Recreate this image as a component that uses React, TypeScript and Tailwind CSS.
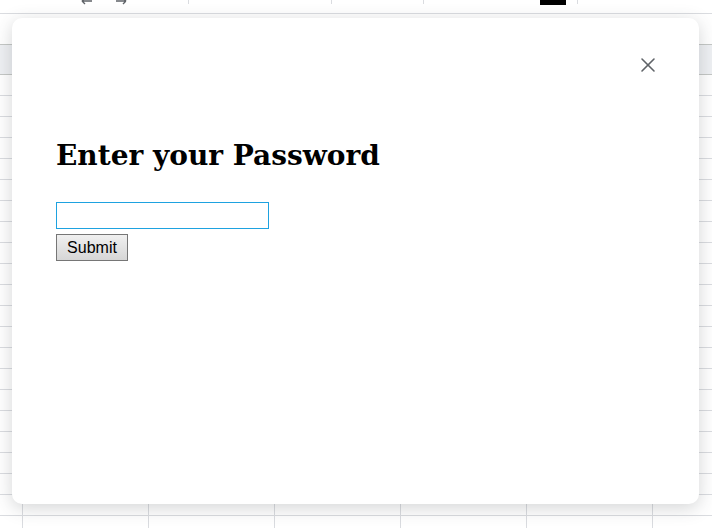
import { X } from 'lucide-react';

const rows = Array.from({ length: 22 });
const cols = Array.from({ length: 6 });

function Arrow({ flip }: { flip?: boolean }) {
  return (
    <svg width="14" height="8" viewBox="0 0 14 8" className={flip ? '-scale-x-100' : ''}>
      <path d="M2 2 H12 M2 2 L5 -1 M2 2 L5 5" stroke="#5f6368" strokeWidth="1.4" fill="none" />
    </svg>
  );
}

function SheetBackdrop() {
  return (
    <div className="absolute inset-0 overflow-hidden bg-white">
      {/* toolbar remnants */}
      <div className="flex h-[14px] items-start border-b border-[#dadce0]">
        <div className="ml-[80px] -mt-[1px] flex gap-[20px]">
          <Arrow />
          <Arrow flip />
        </div>
        <div className="ml-[60px] h-[4px] w-px bg-[#dadce0]" />
        <div className="ml-[142px] h-[4px] w-px bg-[#dadce0]" />
        <div className="ml-[91px] h-[4px] w-px bg-[#dadce0]" />
        <div className="ml-[116px] h-[5px] w-[26px] bg-black" />
        <div className="ml-[11px] h-[4px] w-px bg-[#dadce0]" />
      </div>
      <div className="h-[30px]" />
      {/* column header */}
      <div className="h-[31px] border-y border-[#c4c7c5] bg-[#eef0f3]" />
      {rows.map((_, i) => (
        <div key={i} className="flex h-[21px] border-b border-[#dadce0]">
          <div className="w-[23px] shrink-0 border-r border-[#dadce0]" />
          {cols.map((__, j) => (
            <div key={j} className="w-[126px] shrink-0 border-r border-[#dadce0]" />
          ))}
        </div>
      ))}
    </div>
  );
}

export default function App() {
  return (
    <div className="relative h-[528px] w-[712px] overflow-hidden">
      <SheetBackdrop />

      <div className="absolute left-[12px] top-[18px] flex h-[486px] w-[687px] flex-col rounded-[10px] bg-white shadow-[0_4px_18px_rgba(60,64,67,0.22)]">
        <div className="flex justify-end pr-[39px] pt-[35px]">
          <button type="button" className="text-[#5f6368]">
            <X className="h-6 w-6" strokeWidth={1.6} />
          </button>
        </div>

        <div className="flex flex-col items-start pl-[44px] pt-[62px]">
          <h1
            className="text-[28px] font-bold leading-[34px] text-black"
            style={{ fontFamily: 'Georgia, "DejaVu Serif", serif' }}
          >
            Enter your Password
          </h1>
          <input
            type="password"
            className="mt-[29px] h-[27px] w-[213px] border border-[#1ea2e0] bg-white px-1 outline-none"
          />
          <button
            type="button"
            className="mt-[5px] h-[27px] w-[72px] border border-[#767676] bg-gradient-to-b from-[#f0f0f0] to-[#d6d6d6] text-[16px] text-black"
            style={{ fontFamily: '"Liberation Sans", Arial, sans-serif' }}
          >
            Submit
          </button>
        </div>
      </div>
    </div>
  );
}
